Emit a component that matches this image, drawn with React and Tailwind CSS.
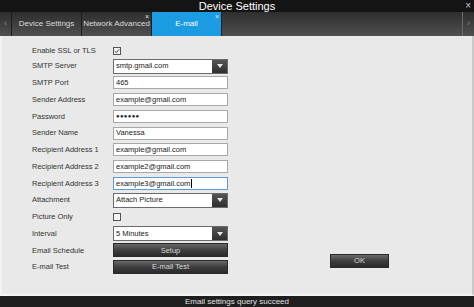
import React from "react";

const font = { fontFamily: '"Liberation Sans", Arial, sans-serif' };

function Label({ children }) {
  return <div className="w-[81px] shrink-0 text-[7.5px] text-[#333] leading-none whitespace-nowrap">{children}</div>;
}

function Input({ value, focus, dots }) {
  return (
    <div className={`w-[115px] h-[13px] bg-white border ${focus ? "border-[#5b9bd5]" : "border-[#a8a8a8]"} flex items-center pl-[2px] ${dots ? "text-[6px] tracking-[0.3px]" : "text-[7.5px]"} text-[#222] leading-none whitespace-nowrap`}>
      {value}
      {focus && <span className="inline-block w-[1px] h-[9px] bg-black ml-[1px]" />}
    </div>
  );
}

function Select({ value }) {
  return (
    <div className="w-[115px] h-[15px] bg-white border border-[#6a6a6a] flex items-stretch">
      <div className="flex-1 flex items-center pl-[2px] text-[7.5px] text-[#222] leading-none whitespace-nowrap">{value}</div>
      <div className="w-[15px] bg-gradient-to-b from-[#555] to-[#2e2e2e] flex items-center justify-center">
        <svg width="6" height="4" viewBox="0 0 6 4"><path d="M0 0h6L3 4z" fill="#e8e8e8" /></svg>
      </div>
    </div>
  );
}

function Check({ checked }) {
  return (
    <div className="w-[8px] h-[8px] border border-[#555] bg-[#f4f4f4] flex items-center justify-center">
      {checked && (
        <svg width="6" height="6" viewBox="0 0 6 6"><path d="M0.8 3.2L2.4 4.6L5.3 1.2" stroke="#333" strokeWidth="0.9" fill="none" /></svg>
      )}
    </div>
  );
}

function Btn({ children, w = "w-[115px]" }) {
  return (
    <div className={`${w} h-[14px] bg-gradient-to-b from-[#6a6a6a] via-[#3e3e3e] to-[#2a2a2a] border border-[#2a2a2a] flex items-center justify-center text-[7.5px] text-[#d8d8d8] leading-none`}>
      {children}
    </div>
  );
}

function Row({ label, children, h = "h-[16.75px]" }) {
  return (
    <div className={`${h} flex items-center`}>
      <Label>{label}</Label>
      {children}
    </div>
  );
}

function Tab({ label, active, close }) {
  return (
    <div className={`relative w-[70px] flex items-center justify-center text-[8px] leading-none whitespace-nowrap border-r border-[#1e1e1e] ${active ? "bg-[#1a9be2] text-white" : "text-[#dcdcdc]"}`}>
      {label}
      {close && <span className="absolute right-[2px] top-[1px] text-[7px] leading-none text-[#e8e8e8]">×</span>}
    </div>
  );
}

export default function App() {
  return (
    <div className="w-[474px] h-[307px] flex flex-col bg-[#1b1b1b] overflow-hidden" style={font}>
      <div className="h-[12px] bg-[#141414] relative flex items-center justify-center">
        <span className="text-[11px] leading-none text-white">Device Settings</span>
        <span className="absolute right-[3px] top-[1px] text-[10px] leading-none text-[#ccc]">×</span>
      </div>
      <div className="h-[24px] flex items-stretch bg-gradient-to-b from-[#2e2e2e] to-[#505050]">
        <div className="w-[12px] flex items-center justify-center text-[9px] text-[#888] border-r border-[#1e1e1e]">‹</div>
        <Tab label="Device Settings" />
        <Tab label="Network Advanced" close />
        <Tab label="E-mail" active close />
        <div className="flex-1" />
        <div className="w-[12px] flex items-center justify-center text-[9px] text-[#888] border-l border-[#6a6a6a]">›</div>
      </div>
      <div className="flex-1 flex bg-[#e9e9e9] border-l-[2px] border-l-[#f2f2f2] border-r-[2px] border-r-[#c9c9c9] border-b-[2px] border-b-[#f5f5f5]">
        <div className="flex flex-col pl-[30px] pt-[8.25px]">
          <Row label="Enable SSL or TLS" h="h-[13.5px]"><Check checked /></Row>
          <Row label="SMTP Server"><Select value="smtp.gmail.com" /></Row>
          <Row label="SMTP Port"><Input value="465" /></Row>
          <Row label="Sender Address"><Input value="example@gmail.com" /></Row>
          <Row label="Password"><Input value="●●●●●●" dots /></Row>
          <Row label="Sender Name"><Input value="Vanessa" /></Row>
          <Row label="Recipient Address 1"><Input value="example@gmail.com" /></Row>
          <Row label="Recipient Address 2"><Input value="example2@gmail.com" /></Row>
          <Row label="Recipient Address 3"><Input value="example3@gmail.com" focus /></Row>
          <Row label="Attachment"><Select value="Attach Picture" /></Row>
          <Row label="Picture Only"><Check /></Row>
          <Row label="Interval"><Select value="5 Minutes" /></Row>
          <Row label="Email Schedule"><Btn>Setup</Btn></Row>
          <Row label="E-mail Test"><Btn>E-mail Test</Btn></Row>
        </div>
        <div className="flex-1 flex items-end pl-[102px] pb-[26px]">
          <Btn w="w-[59px]">OK</Btn>
        </div>
      </div>
      <div className="h-[11px] bg-[#1e1e1e] flex items-center justify-center text-[8px] leading-none text-[#e0e0e0]">
        Email settings query succeed
      </div>
    </div>
  );
}
